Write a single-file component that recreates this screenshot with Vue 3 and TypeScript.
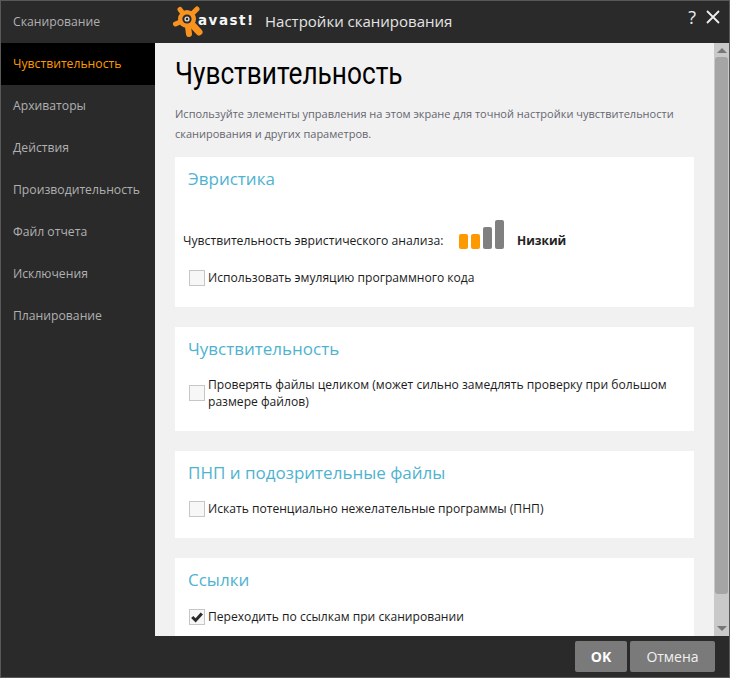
<script setup lang="ts">
const navItems: string[] = ['Сканирование', 'Чувствительность', 'Архиваторы', 'Действия', 'Производительность', 'Файл отчета', 'Исключения', 'Планирование']
const activeItem = 'Чувствительность'
</script>

<template>
  <div class="window">
    <aside class="sidebar">
      <div v-for="item in navItems" :key="item" class="nav-item" :class="{ active: item === activeItem }">{{ item }}</div>
    </aside>
    <div class="right">
      <header class="titlebar">
        <svg class="logo-mark" width="32" height="32" viewBox="0 0 32 32">
          <g stroke="#f7931e" stroke-linecap="round" fill="none">
            <path d="M15 13 L8 3.5" stroke-width="5" />
            <path d="M15 13 L25 3" stroke-width="5" />
            <path d="M15 13 L3.5 18" stroke-width="5" />
            <path d="M15 13 L27 26" stroke-width="7" />
            <path d="M15 13 L17 28" stroke-width="6" />
          </g>
          <circle cx="15" cy="13" r="9" fill="#f7931e" />
          <circle cx="15" cy="13" r="4.6" fill="#2a2a2a" />
          <circle cx="15" cy="13" r="2.6" fill="#d8d8d8" />
          <circle cx="15" cy="13" r="1.2" fill="#2a2a2a" />
        </svg>
        <span class="logo-text">avast!</span>
        <span class="app-title">Настройки сканирования</span>
        <span class="help">?</span>
        <svg class="close" width="16" height="16" viewBox="0 0 16 16">
          <path d="M2 2 L14 14 M14 2 L2 14" stroke="#eee" stroke-width="1.8" fill="none" />
        </svg>
      </header>
      <div class="body">
        <main class="content">
          <h1 class="heading">Чувствительность</h1>
          <p class="intro">Используйте элементы управления на этом экране для точной настройки чувствительности сканирования и других параметров.</p>

          <section class="card card-heur">
            <h2>Эвристика</h2>
            <div class="level-row">
              <span class="level-label">Чувствительность эвристического анализа:</span>
              <span class="bars">
                <i class="bar on b1"></i>
                <i class="bar on b1"></i>
                <i class="bar b2"></i>
                <i class="bar b3"></i>
              </span>
              <b class="level-value">Низкий</b>
            </div>
            <label class="check"><span class="box"></span><span>Использовать эмуляцию программного кода</span></label>
          </section>

          <section class="card card-sens">
            <h2>Чувствительность</h2>
            <label class="check multi"><span class="box"></span><span>Проверять файлы целиком (может сильно замедлять проверку при большом размере файлов)</span></label>
          </section>

          <section class="card card-pup">
            <h2>ПНП и подозрительные файлы</h2>
            <label class="check"><span class="box"></span><span>Искать потенциально нежелательные программы (ПНП)</span></label>
          </section>

          <section class="card card-links">
            <h2>Ссылки</h2>
            <label class="check">
              <span class="box">
                <svg width="14" height="14" viewBox="0 0 14 14"><path d="M2.2 7 L5.6 10.4 L11.8 3.4" stroke="#2a2a2a" stroke-width="3" fill="none" /></svg>
              </span>
              <span>Переходить по ссылкам при сканировании</span>
            </label>
          </section>
        </main>
        <div class="scrollbar">
          <span class="arrow up"></span>
          <span class="thumb"></span>
          <span class="arrow down"></span>
        </div>
      </div>
      <footer class="footer">
        <button class="btn ok">OK</button>
        <button class="btn">Отмена</button>
      </footer>
    </div>
  </div>
</template>

<style scoped>
.window {
  box-sizing: border-box;
  width: 730px;
  height: 678px;
  display: flex;
  background: #2a2a2a;
  border: 1px solid #585858;
  font-family: "Open Sans", "Noto Sans", sans-serif;
  font-size: 12px;
  overflow: hidden;
}
.sidebar {
  width: 154px;
  flex: none;
  display: flex;
  flex-direction: column;
}
.nav-item {
  height: 42px;
  line-height: 42px;
  padding-left: 12px;
  color: #b0b0b0;
  font-size: 12.2px;
}
.nav-item.active {
  background: #000;
  color: #f90;
}
.right {
  flex: 1;
  min-width: 0;
  display: flex;
  flex-direction: column;
}
.titlebar {
  height: 42px;
  flex: none;
  display: flex;
  align-items: center;
  padding-left: 17px;
  color: #eee;
}
.logo-mark {
  flex: none;
  margin-right: -6px;
}
.logo-text {
  width: 67px;
  margin-top: -4px;
  font-family: "DejaVu Sans", sans-serif;
  font-weight: 700;
  font-size: 13.5px;
  letter-spacing: 1.5px;
  color: #f6f6f6;
}
.app-title {
  flex: 1;
  margin-top: -3px;
  font-size: 15px;
  color: #e4e4e4;
}
.help {
  font-size: 18px;
  margin-top: -10px;
  margin-right: 9px;
  color: #eee;
}
.close {
  margin-top: -10px;
  margin-right: 8px;
}
.body {
  flex: 1;
  min-height: 0;
  display: flex;
}
.content {
  flex: 1;
  min-width: 0;
  overflow: hidden;
  background: #f1f1f1;
  padding: 0 20px;
}
.heading {
  margin: 11px 0 0;
  height: 38px;
  line-height: 38px;
  font-family: Roboto, sans-serif;
  font-weight: 400;
  font-size: 32px;
  color: #000;
  transform: scaleX(0.82);
  transform-origin: left center;
  white-space: nowrap;
}
.intro {
  margin: 12px 0 13px;
  line-height: 20px;
  font-size: 11px;
  color: #66666f;
}
.card {
  background: #fff;
  padding: 0 13px;
  margin-bottom: 20px;
}
.card h2 {
  margin: 0;
  padding-top: 10px;
  font-weight: 400;
  font-size: 17px;
  line-height: 24px;
  color: #4fb3d0;
}
.card-heur { height: 150px; }
.card-sens { height: 104px; }
.card-pup { height: 87px; }
.card-links { height: 90px; }
.level-row {
  display: flex;
  align-items: flex-end;
  height: 30px;
  margin: 28px 0 0 -5px;
  color: #1c1c1c;
}
.level-label {
  width: 276px;
  font-size: 12.2px;
}
.bars {
  display: flex;
  align-items: flex-end;
  gap: 3px;
  width: 58px;
  height: 30px;
}
.bar {
  width: 9px;
  border-radius: 2px;
  background: #808080;
}
.bar.on { background: #f90; }
.b1 { height: 15px; }
.b2 { height: 22px; }
.b3 { height: 29px; }
.level-value {
  font-weight: 700;
  color: #222;
}
.check {
  display: flex;
  align-items: center;
  gap: 3px;
  margin: 20px 0 0 1px;
  color: #1c1c1c;
  font-size: 12.1px;
  line-height: 17px;
}
.card-sens .check { margin-top: 15px; }
.card-pup .check { margin-top: 15px; }
.card-links .check { margin-top: 16px; }
.box {
  box-sizing: border-box;
  flex: none;
  width: 16px;
  height: 16px;
  border: 1px solid #c6c6c6;
  background: #f7f7f7;
  display: flex;
  align-items: center;
  justify-content: center;
}
.scrollbar {
  width: 15px;
  flex: none;
  background: #c9c9c9;
  display: flex;
  flex-direction: column;
  align-items: center;
}
.thumb {
  width: 13px;
  height: 537px;
  margin-top: 4px;
  background: #a5a5a5;
  border-radius: 3px;
}
.arrow {
  width: 0;
  height: 0;
  border-left: 5px solid transparent;
  border-right: 5px solid transparent;
}
.arrow.up {
  margin-top: 5px;
  border-bottom: 5px solid #777;
}
.arrow.down {
  margin-top: auto;
  margin-bottom: 5px;
  border-top: 5px solid #777;
}
.footer {
  height: 41px;
  flex: none;
  box-sizing: border-box;
  display: flex;
  justify-content: flex-end;
  gap: 3px;
  padding: 5px 14px 0 0;
}
.btn {
  width: 85px;
  height: 31px;
  border: 0;
  padding: 0;
  border-radius: 2px;
  background: #7a7a7a;
  color: #f0f0f0;
  font-family: "Open Sans", sans-serif;
  font-size: 14px;
}
.btn.ok {
  width: 52px;
  font-weight: 700;
  color: #fff;
}
</style>
